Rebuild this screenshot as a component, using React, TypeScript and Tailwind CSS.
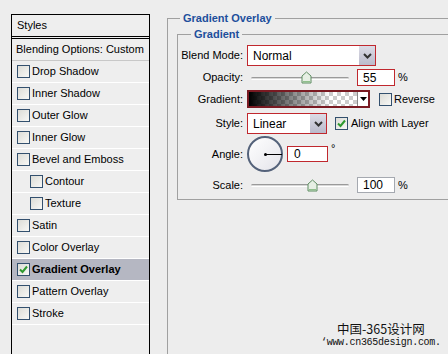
import React from 'react';

type StyleItem = {
  label: string;
  indent?: boolean;
  checked?: boolean;
  selected?: boolean;
};

const items: StyleItem[] = [
  { label: 'Drop Shadow' },
  { label: 'Inner Shadow' },
  { label: 'Outer Glow' },
  { label: 'Inner Glow' },
  { label: 'Bevel and Emboss' },
  { label: 'Contour', indent: true },
  { label: 'Texture', indent: true },
  { label: 'Satin' },
  { label: 'Color Overlay' },
  { label: 'Gradient Overlay', checked: true, selected: true },
  { label: 'Pattern Overlay' },
  { label: 'Stroke' },
];

const CheckBox: React.FC<{ checked?: boolean }> = ({ checked }) => (
  <span className="w-[13px] h-[13px] shrink-0 border border-[#33506e] bg-gradient-to-br from-[#dcdcd6] to-[#f8f8f6] flex items-center justify-center">
    {checked && (
      <svg width="9" height="9" viewBox="0 0 9 9">
        <path d="M1 4.5 L3.5 7 L8 1.5" fill="none" stroke="#2f9a2f" strokeWidth="2" />
      </svg>
    )}
  </span>
);

const SelectBtn: React.FC = () => (
  <span className="w-[16px] h-full shrink-0 bg-gradient-to-b from-[#dcdce6] to-[#babacb] flex items-center justify-center">
    <svg width="9" height="6" viewBox="0 0 9 6">
      <path d="M1 1 L4.5 4.5 L8 1" fill="none" stroke="#333" strokeWidth="2" />
    </svg>
  </span>
);

const Slider: React.FC<{ pos: number }> = ({ pos }) => (
  <div className="relative w-[98px] h-full ml-[4px]">
    <div className="absolute left-0 right-0 top-1/2 h-[3px] -mt-[1px] border-t border-[#9a9a9a] border-b border-b-white rounded-full bg-[#d8d8d8]" />
    <svg className="absolute top-[2px]" style={{ left: pos }} width="11" height="13" viewBox="0 0 11 13">
      <path d="M1 5 L5.5 1 L10 5 L10 12 L1 12 Z" fill="#e6efe4" stroke="#5f8d62" strokeWidth="1" />
      <path d="M2 10 L9 10 L9 11.5 L2 11.5 Z" fill="#8fbf8c" />
    </svg>
  </div>
);

const Label: React.FC<{ children: React.ReactNode }> = ({ children }) => (
  <span className="w-[65px] mr-[4px] text-right shrink-0">{children}</span>
);

export default function App() {
  return (
    <div
      className="relative w-[448px] h-[354px] overflow-hidden bg-[#ededed] flex text-[11px] text-black"
      style={{ fontFamily: '"Liberation Sans", Arial, sans-serif' }}
    >
      {/* styles list */}
      <div className="ml-[11px] mt-[14px] w-[139px] h-[350px] border border-black bg-[#eeeeee] flex flex-col shrink-0">
        <div className="h-[24px] pl-[5px] flex items-center border-b-[3px] border-double border-black">Styles</div>
        <div className="h-[22px] pl-[4px] flex items-center border-b border-[#c8c8c8]">Blending Options: Custom</div>
        {items.map((it) => (
          <div
            key={it.label}
            className={`h-[22px] flex items-center border-b border-white ${it.indent ? 'pl-[18px]' : 'pl-[5px]'} ${
              it.selected ? 'bg-[#b5b7c2] font-bold' : ''
            }`}
          >
            <CheckBox checked={it.checked} />
            <span className="ml-[2px]">{it.label}</span>
          </div>
        ))}
      </div>

      {/* gradient overlay group */}
      <fieldset className="ml-[17px] mt-[11px] w-[300px] h-[360px] border-l border-t border-[#a0a0a0] pl-[9px] shrink-0">
        <legend className="ml-[3px] px-[3px] h-[14px] leading-[14px] font-bold text-[#1d4f9c]">Gradient Overlay</legend>
        <fieldset className="mt-[2px] border-l border-t border-b border-[#a0a0a0] pb-[6px] w-[290px]">
          <legend className="ml-[13px] px-[3px] h-[14px] leading-[14px] font-bold text-[#1d4f9c]">Gradient</legend>

          <div className="mt-[4px] h-[21px] flex items-center">
            <Label>Blend Mode:</Label>
            <div className="w-[129px] h-[21px] border border-[#c0282e] bg-white flex">
              <span className="flex-1 pl-[5px] flex items-center text-[12px]">Normal</span>
              <SelectBtn />
            </div>
          </div>

          <div className="mt-[3px] h-[17px] flex items-center">
            <Label>Opacity:</Label>
            <Slider pos={50} />
            <div className="ml-[8px] w-[38px] h-[17px] border border-[#c0282e] bg-white pl-[5px] flex items-center text-[12px]">55</div>
            <span className="ml-[3px]">%</span>
          </div>

          <div className="mt-[4px] h-[18px] flex items-center">
            <Label>Gradient:</Label>
            <div className="w-[123px] h-[18px] border-2 border-[#7a1a22] flex bg-white">
              <div className="flex-1 h-full bg-[conic-gradient(#ffffff_25%,#cccccc_0_50%,#ffffff_0_75%,#cccccc_0)] bg-[length:8px_8px]">
                <div className="w-full h-full bg-gradient-to-r from-black via-[#00000088] via-35% to-transparent to-75%" />
              </div>
              <span className="w-[11px] h-full border-l border-[#888] flex items-center justify-center">
                <svg width="7" height="4" viewBox="0 0 7 4">
                  <path d="M0 0 L7 0 L3.5 4 Z" fill="#000" />
                </svg>
              </span>
            </div>
            <span className="ml-[9px]">
              <CheckBox />
            </span>
            <span className="ml-[2px]">Reverse</span>
          </div>

          <div className="mt-[5px] h-[21px] flex items-center">
            <Label>Style:</Label>
            <div className="w-[80px] h-[21px] border border-[#c0282e] bg-white flex">
              <span className="flex-1 pl-[5px] flex items-center text-[12px]">Linear</span>
              <SelectBtn />
            </div>
            <span className="ml-[8px]">
              <CheckBox checked />
            </span>
            <span className="ml-[3px]">Align with Layer</span>
          </div>

          <div className="mt-[2px] h-[36px] flex items-center">
            <Label>Angle:</Label>
            <div className="relative w-[36px] h-[36px] rounded-full border-2 border-[#54627a] bg-gradient-to-br from-white to-[#e4e4ea]">
              <span className="absolute left-[15px] top-[15px] w-[3px] h-[3px] bg-black rounded-full" />
              <span className="absolute left-[16px] top-[16px] w-[17px] h-px bg-black" />
            </div>
            <div className="ml-[4px] w-[41px] h-[16px] border border-[#c0282e] bg-white pl-[6px] flex items-center text-[12px]">0</div>
            <span className="ml-[3px] self-start mt-[7px] leading-none">°</span>
          </div>

          <div className="mt-[5px] h-[16px] flex items-center">
            <Label>Scale:</Label>
            <Slider pos={56} />
            <div className="ml-[8px] w-[38px] h-[16px] border border-[#a5a9b0] bg-white pl-[5px] flex items-center text-[12px]">100</div>
            <span className="ml-[3px]">%</span>
          </div>
        </fieldset>
      </fieldset>

      {/* watermark */}
      <div className="absolute left-[321px] top-[323px] w-[125px] flex flex-col leading-none text-[#111] whitespace-nowrap">
        <span className="text-[12.5px] ml-[16px]" style={{ fontFamily: '"Noto Sans CJK SC", sans-serif' }}>
          中国-365设计网
        </span>
        <span className="text-[10px] mt-[2px] tracking-[-0.3px]" style={{ fontFamily: '"Liberation Mono", monospace' }}>
          ‘www.cn365design.com.
        </span>
      </div>
    </div>
  );
}
